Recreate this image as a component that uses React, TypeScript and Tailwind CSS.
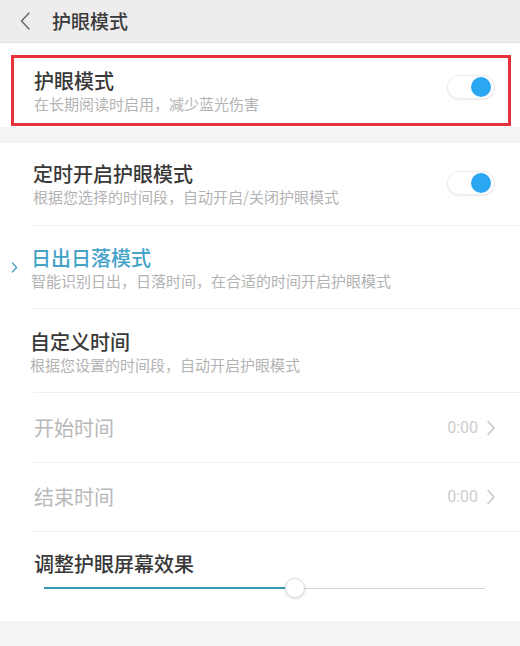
import type { ReactNode } from 'react'

const FONT = { fontFamily: '"Noto Sans CJK SC", "Noto Sans", sans-serif' }

function Toggle({ top }: { top: string }) {
  return (
    <div
      className={`absolute right-[25px] ${top} h-[24px] w-[48px] rounded-full border border-[#ececec] bg-white shadow-[0_1px_2px_rgba(0,0,0,0.08)]`}
    >
      <div className="absolute right-[3px] top-[1px] h-[20px] w-[20px] rounded-full bg-[#2ba6f3]" />
    </div>
  )
}

function Chevron({ className, color, width = '1.4' }: { className: string; color: string; width?: string }) {
  return (
    <svg viewBox="0 0 8 16" className={className} fill="none" stroke={color} strokeWidth={width}>
      <path d="M1 1.5 7 8 1 14.5" strokeLinecap="round" strokeLinejoin="round" />
    </svg>
  )
}

function Divider() {
  return <div className="ml-[33px] h-px bg-[#efefef]" />
}

function TimeRow({ label, height }: { label: string; height: string }) {
  return (
    <div className={`flex ${height} items-center justify-between pl-[34px] pr-[25px]`}>
      <span className="text-[20px] leading-[26px] text-[#b8b8b8]">{label}</span>
      <div className="flex items-center gap-[9px]">
        <span className="text-[16px] text-[#cdcdcd]" style={{ fontFamily: 'Roboto, sans-serif' }}>
          0:00
        </span>
        <Chevron className="h-[16px] w-[8px]" color="#c4c4c4" />
      </div>
    </div>
  )
}

function TextBlock({ title, sub, titleClass }: { title: string; sub: string; titleClass?: string }): ReactNode {
  return (
    <div className="flex flex-col">
      <span className={`text-[20px] font-medium leading-[26px] ${titleClass ?? 'text-[#383838]'}`}>{title}</span>
      <span className="mt-[-1px] text-[15px] leading-[22px] text-[#b3b3b3]">{sub}</span>
    </div>
  )
}

export default function App() {
  return (
    <div className="h-[646px] w-[520px] overflow-hidden bg-[#f4f4f5]" style={FONT}>
      <div className="flex h-[43px] items-center border-b border-[#e2e2e2] bg-[#ededee]">
        <svg viewBox="0 0 10 18" className="ml-[20px] h-[18px] w-[10px]" fill="none" stroke="#6a6a6a" strokeWidth="1.5">
          <path d="M9 1 1.5 9 9 17" strokeLinecap="round" strokeLinejoin="round" />
        </svg>
        <span className="ml-[22px] text-[19px] font-medium text-[#3a3a3a]">护眼模式</span>
      </div>

      <div className="relative h-[84px] bg-white pl-[34px] pt-[25px]">
        <TextBlock title="护眼模式" sub="在长期阅读时启用，减少蓝光伤害" />
        <Toggle top="top-[32px]" />
        <div className="pointer-events-none absolute bottom-[1px] left-[11px] right-[9px] top-[12px] border-[3px] border-[#e8323b]" />
      </div>

      <div className="mt-[16px] bg-white">
        <div className="relative h-[82px] pl-[33px] pt-[18px]">
          <TextBlock title="定时开启护眼模式" sub="根据您选择的时间段，自动开启/关闭护眼模式" />
          <Toggle top="top-[28px]" />
        </div>
        <Divider />
        <div className="flex h-[82px] items-start pl-[11px] pt-[19px]">
          <Chevron className="mt-[17px] h-[11px] w-[7px]" color="#4aa3c4" width="2" />
          <div className="ml-[13px]">
            <TextBlock title="日出日落模式" sub="智能识别日出，日落时间，在合适的时间开启护眼模式" titleClass="text-[#45a2c9]" />
          </div>
        </div>
        <Divider />
        <div className="h-[83px] pl-[30px] pt-[20px]">
          <TextBlock title="自定义时间" sub="根据您设置的时间段，自动开启护眼模式" />
        </div>
        <Divider />
        <TimeRow label="开始时间" height="h-[69px]" />
        <Divider />
        <TimeRow label="结束时间" height="h-[68px]" />
        <Divider />
        <div className="h-[89px] pl-[34px] pt-[19px]">
          <span className="block text-[20px] font-medium leading-[26px] text-[#383838]">调整护眼屏幕效果</span>
          <div className="relative ml-[10px] mr-[35px] mt-[1px] flex h-[20px] items-center">
            <div className="h-[2px] w-[251px] bg-[#3799b6]" />
            <div className="h-px flex-1 bg-[#d2d2d2]" />
            <div className="absolute left-[241px] top-0 h-[20px] w-[20px] rounded-full border border-[#dedede] bg-white shadow-[0_1px_3px_rgba(0,0,0,0.15)]" />
          </div>
        </div>
      </div>
    </div>
  )
}
